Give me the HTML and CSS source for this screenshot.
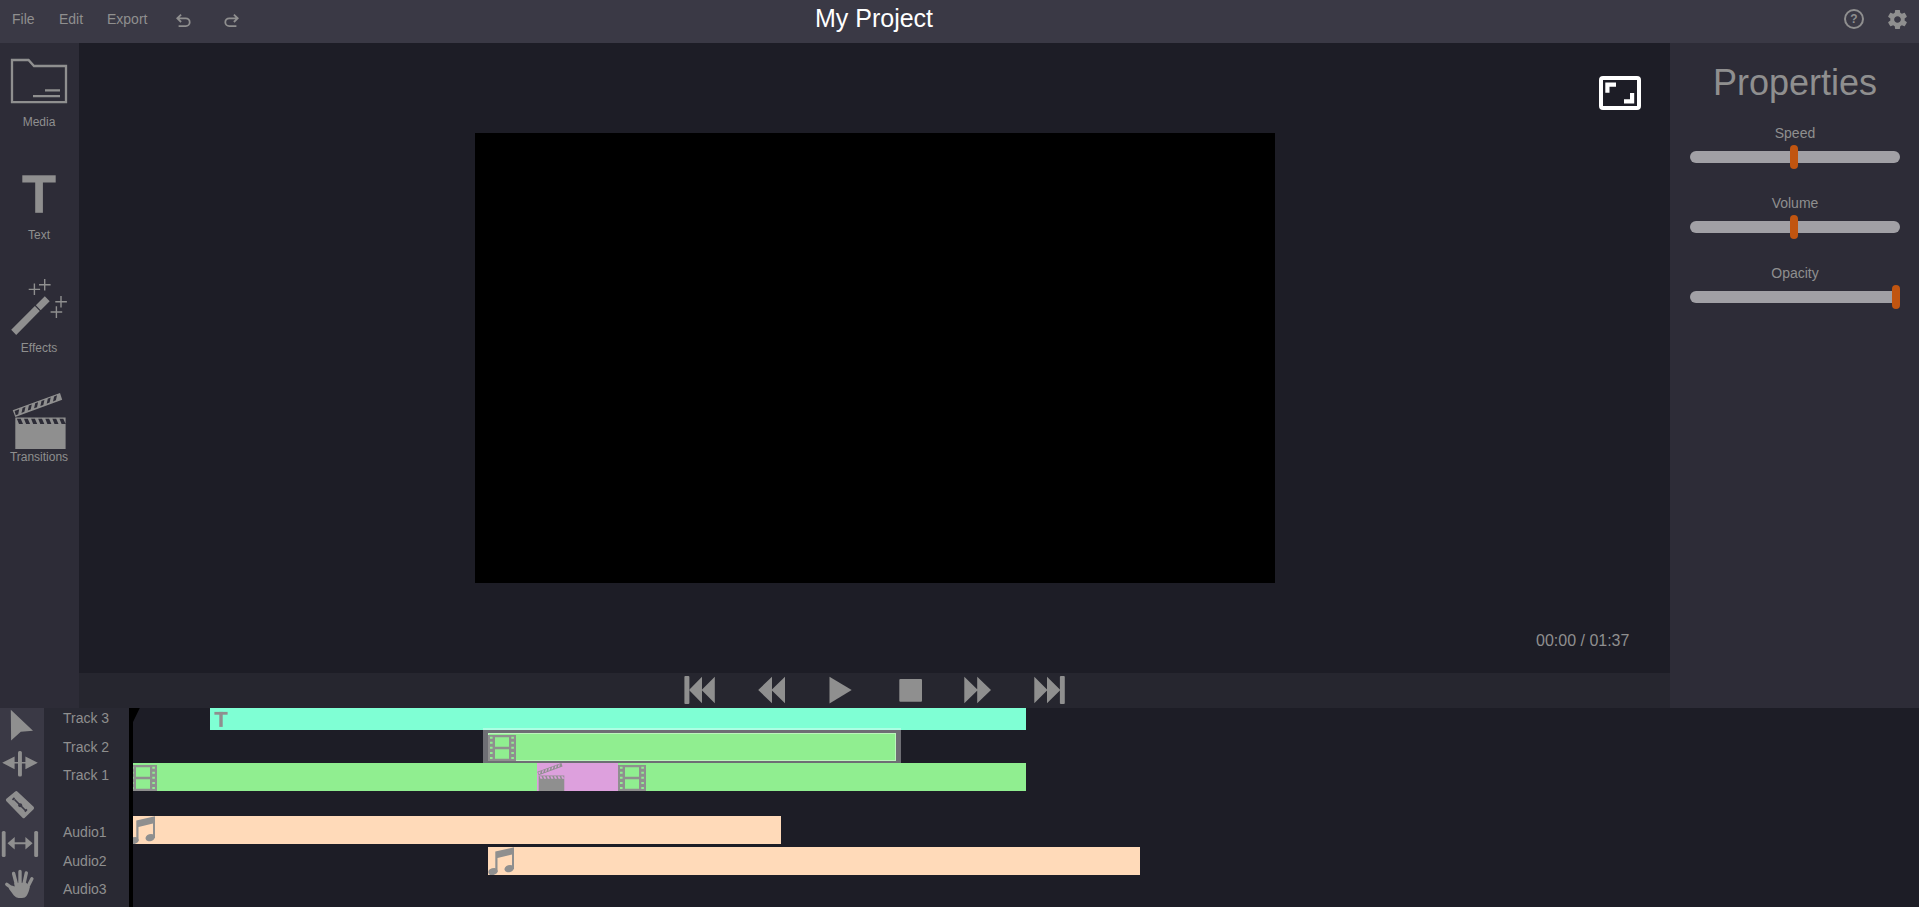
FILE: index.html
```html
<!DOCTYPE html>
<html lang="en">
<head>
<meta charset="utf-8">
<title>My Project</title>
<link rel="stylesheet" href="styles.css">
</head>
<body>
<svg class="defs" aria-hidden="true">
  <symbol id="clapper" viewBox="0 0 55 56"><path fill-rule="evenodd" d="M3.3 24.5H53.6V56H3.3zM4.9 25.8l2.1 5.2h4l-2.3-5.2zm7.1 0l2.1 5.2h4l-2.3-5.2zm7.1 0l2.1 5.2h4l-2.3-5.2zm7.1 0l2.1 5.2h4l-2.3-5.2zm7.1 0l2.1 5.2h4l-2.3-5.2zm7.1 0l2.1 5.2h4l-2.3-5.2zm7.1 0l2.1 5.2h4l-2.3-5.2z"/><path fill-rule="evenodd" d="M.7 17.3L48 0l2.2 6.8L3.3 24zM2.6 18l1.2 4.2 2.4-.9 1-5zM10.6 14.900l2.900-1.100-1.100 5-2.900 1.100zM16.900 12.600l2.900-1.100-1.100 5-2.900 1.100zM23.200 10.300l2.900-1.100-1.100 5-2.900 1.100zM29.500 8l2.900-1.100-1.100 5-2.900 1.100zM35.800 5.700l2.900-1.100-1.100 5-2.900 1.100zM42.100 3.400l2.900-1.100-1.100 5-2.900 1.100z"/></symbol>
  <symbol id="film" viewBox="0 0 28 26"><path fill-rule="evenodd" d="M0 0H28V26H0zM7 2.3h14v9.5H7zM7 14.3h14v9.5H7zM2 1.7h2.6v2H2zm0 5h2.6v2H2zm0 5h2.6v2H2zm0 5.2h2.6v2H2zm0 5.2h2.6v2H2zM23.3 1.7h2.6v2h-2.6zm0 5h2.6v2h-2.6zm0 5h2.6v2h-2.6zm0 5.2h2.6v2h-2.6zm0 5.2h2.6v2h-2.6z"/></symbol>
  <symbol id="music" viewBox="0 0 27 28"><path d="M7.3 4.6L26 .3V22h-2V7.6L9.5 11v14H7.3z"/><ellipse cx="5" cy="24.6" rx="4.7" ry="3.4" transform="rotate(-18 5 24.6)"/><ellipse cx="21.2" cy="21.6" rx="4.8" ry="3.5" transform="rotate(-18 21.2 21.6)"/></symbol>
</svg>

<div class="app">
  <header class="topbar">
    <nav class="menu">
      <span class="menu-file">File</span>
      <span class="menu-edit">Edit</span>
      <span class="menu-export">Export</span>
      <svg class="undo" width="16" height="16" viewBox="0 0 16 16"><path d="M5.1 1.600L1.300 5.300 5.100 9M1.300 5.300H9.800a3.900 3.900 0 0 1 0 7.800H2.600"/></svg>
      <svg class="redo" width="16" height="16" viewBox="0 0 16 16"><path d="M10.900 1.600l3.800 3.700L10.900 9M14.700 5.300H6.200a3.900 3.900 0 0 0 0 7.800H13.400"/></svg>
    </nav>
    <h1 class="title">My Project</h1>
    <div class="settings">
      <span class="help">?</span>
      <svg width="23" height="23" viewBox="0 0 24 24"><path d="M19.43 12.98c.04-.32.07-.64.07-.98s-.03-.66-.07-.98l2.11-1.65c.19-.15.24-.42.12-.64l-2-3.46c-.12-.22-.39-.3-.61-.22l-2.49 1c-.52-.4-1.08-.73-1.69-.98l-.38-2.65C14.46 2.18 14.25 2 14 2h-4c-.25 0-.46.18-.49.42l-.38 2.65c-.61.25-1.17.59-1.69.98l-2.49-1c-.23-.09-.49 0-.61.22l-2 3.46c-.13.22-.07.49.12.64l2.11 1.65c-.04.32-.07.65-.07.98s.03.66.07.98l-2.11 1.65c-.19.15-.24.42-.12.64l2 3.46c.12.22.39.3.61.22l2.49-1c.52.4 1.08.73 1.69.98l.38 2.65c.03.24.24.42.49.42h4c.25 0 .46-.18.49-.42l.38-2.65c.61-.25 1.17-.59 1.69-.98l2.49 1c.23.09.49 0 .61-.22l2-3.46c.12-.22.07-.49-.12-.64l-2.11-1.65zM12 15.5c-1.93 0-3.5-1.57-3.5-3.5s1.57-3.5 3.5-3.5 3.5 1.57 3.5 3.5-1.57 3.5-3.5 3.5z"/></svg>
    </div>
  </header>

  <main class="workspace">
    <aside class="sidebar">
      <div class="side-item"><svg width="79" height="72" viewBox="0 43 79 72"><path class="line" d="M12 60H28.5L34 66H66V102.200H12zM45 90.400H60M33 96.200H60"/></svg><span>Media</span></div>
      <div class="side-item"><svg width="79" height="72" viewBox="0 156 79 72"><rect x="22.3" y="175.3" width="33.4" height="7.2"/><rect x="35.2" y="180" width="7.7" height="32.8"/></svg><span>Text</span></div>
      <div class="side-item"><svg width="79" height="72" viewBox="0 269 79 72"><path d="M11.2 329.8L34.9 306l4.9 4.9L16.2 335zM35.8 305.2L44.8 296.2l4.9 5-9 9z"/><path class="spark" d="M28.7 289.4h11.4M34.4 283.4v11.6M39 284.7h11.6M44.7 279v11.4M55.3 301.7h11.6M61 296v11.4M50.6 312h11.6M56.4 306.3v11.6"/></svg><span>Effects</span></div>
      <div class="side-item"><svg width="79" height="68" viewBox="0 382 79 68"><use href="#clapper" x="12" y="393" width="55" height="56"/></svg><span>Transitions</span></div>
    </aside>

    <section class="preview">
      <div class="stage">
        <div class="screen"></div>
        <svg class="fullscreen" width="42" height="34" viewBox="0 0 42 34"><rect x="2" y="2" width="38" height="30" rx="2" fill="none" stroke="#fff" stroke-width="4"/><path d="M6.3 6.5H17v4.2h-6.5v6H6.3zM35.2 27.5H25v-4.2h6v-6.2h4.2z" fill="#fff"/></svg>
        <span class="time">00:00 / 01:37</span>
      </div>
      <div class="controls">
        <svg class="c-first" width="31" height="28" viewBox="684 676 31 28"><rect x="684.4" y="676" width="5" height="28" rx="1"/><path d="M689 690l13-13.2v26.4zM701.6 690l13.2-13.2v26.4z"/></svg>
        <svg class="c-rewind" width="28" height="28" viewBox="758 676 28 28"><path d="M758.2 690l13.8-13.2v26.4zM771.4 690L785 676.8v26.4z"/></svg>
        <svg class="c-play" width="23" height="28" viewBox="829 676 23 28"><path d="M829.5 676.8L851.7 690l-22.2 13.6z"/></svg>
        <svg class="c-stop" width="23" height="28" viewBox="899 676 23 28"><rect x="899.3" y="679" width="22.7" height="22.8" rx="1"/></svg>
        <svg class="c-forward" width="28" height="28" viewBox="964 676 28 28"><path d="M964.3 676.8l13.6 13.2-13.6 13.2zM977.2 676.8L991 690l-13.8 13.2z"/></svg>
        <svg class="c-last" width="31" height="28" viewBox="1034 676 31 28"><path d="M1034.3 676.8l13.2 13.2-13.2 13.2zM1047 676.8l13.4 13.2-13.4 13.2z"/><rect x="1059.9" y="676" width="4.9" height="28" rx="1"/></svg>
      </div>
    </section>

    <aside class="properties">
      <h2>Properties</h2>
      <div class="prop"><label>Speed</label><div class="slider"><div class="thumb mid"></div></div></div>
      <div class="prop"><label>Volume</label><div class="slider"><div class="thumb mid"></div></div></div>
      <div class="prop"><label>Opacity</label><div class="slider"><div class="thumb end"></div></div></div>
    </aside>
  </main>

  <footer class="timeline">
    <div class="tools">
      <svg width="44" height="35" viewBox="0 708 44 35"><path d="M10.800 709.800L33 730.800l-12.200.9-9.700 8.700z"/></svg>
      <svg width="44" height="41" viewBox="0 743 44 41"><rect x="18" y="751" width="3.900" height="25.600" rx="1.500"/><path d="M2.200 762.800l12.400-6.400v5.600h10.800v-5.600l12.400 6.400-12.400 6.400v-5.600H14.600v5.600z"/></svg>
      <svg width="44" height="40" viewBox="0 784 44 40"><path d="M15.200 791.400q1.400-.8 2.400.3L33.600 806.800q1 1.300 0 2.400L24.800 817.700q-1.200 1-2.300 0L6.200 801q-.8-1.200.2-2.300z"/><path class="cut" d="M14.500 799.500L26 811M12.500 799.800l2-2M24.900 811.600l2-2.200"/><circle class="cut-dot" cx="20.200" cy="805.200" r="2"/></svg>
      <svg width="44" height="40" viewBox="0 824 44 40"><rect x="1.800" y="831" width="3.800" height="26" rx="1.500"/><rect x="34.200" y="831" width="3.900" height="26" rx="1.500"/><path d="M7.500 843.200l7.200-6.200v5.200h10.700v-5.200l7.200 6.200-7.200 6.200v-5.200H14.700v5.200z"/></svg>
      <svg width="44" height="43" viewBox="0 864 44 43"><path class="finger" d="M13.600 873.500l3 11.500M20 871.400V885M26.300 873l-2.600 12M31.900 878.800l-5.600 11M6.800 884.300l8.200 6"/><path d="M14.300 883l12-.3 3.500 4.600q-1.200 6-3.300 8.600-1.200 2.100-4.500 2.100h-3.500q-2.600-.3-4.800-2.700l-5-6.800 3-3 3 1z"/></svg>
    </div>
    <div class="labels">
      <span>Track 3</span><span>Track 2</span><span>Track 1</span>
      <span class="audio-first">Audio1</span><span>Audio2</span><span>Audio3</span>
    </div>
    <div class="lanes">
      <div class="lane lane-text"><div class="clip text-clip"><svg width="22" height="22" viewBox="210 708 22 22"><rect x="214.400" y="711.900" width="13.200" height="2.800"/><rect x="219.300" y="711.900" width="3.400" height="15"/></svg></div></div>
      <div class="lane lane-2"><div class="clip video selected"><svg width="28" height="26"><use href="#film"/></svg></div></div>
      <div class="lane lane-1"><div class="clip video v-a"><svg width="28" height="26"><use href="#film"/></svg></div><div class="clip transition"><svg width="28" height="28"><use href="#clapper" width="28" height="28.500"/></svg></div><div class="clip video v-b"><svg width="28" height="26"><use href="#film"/></svg></div></div>
      <div class="lane lane-a1"><div class="clip audio"><svg width="27" height="28"><use href="#music"/></svg></div></div>
      <div class="lane lane-a2"><div class="clip audio"><svg width="27" height="28"><use href="#music"/></svg></div></div>
      <svg class="playhead" width="11" height="199" viewBox="0 0 11 199"><path d="M0 0H10.800L4 14V199H0z"/></svg>
    </div>
  </footer>
</div>
</body>
</html>
```

FILE: styles.css
```css
* { box-sizing: border-box; }
body {
  margin: 0;
  background: #1d1d26;
  color: #8f8f8f;
  font: 14px/16px "Liberation Sans", Arial, sans-serif;
  overflow: hidden;
}
svg { display: block; fill: #8f8f8f; flex: none; }
.defs { width: 0; height: 0; position: absolute; }
.app { display: flex; flex-direction: column; width: 1919px; height: 907px; }

.topbar {
  display: grid;
  grid-template-columns: 79px 1590px 250px;
  height: 43px;
  background: #3a3945;
}
.menu { display: flex; padding: 11px 0 0 12px; width: 260px; grid-area: 1 / 1; }
.menu-file { width: 47px; }
.menu-edit { width: 48px; }
.menu-export { width: 69px; }
.undo, .redo { margin-top: 2px; fill: none; stroke: #8f8f8f; stroke-width: 1.8; }
.redo { margin-left: 31px; }
.title {
  grid-area: 1 / 2;
  margin: 4px 0 0;
  color: #fff;
  font-size: 25px;
  line-height: 28px;
  font-weight: normal;
  text-align: center;
}
.settings { grid-area: 1 / 3; display: flex; justify-content: flex-end; padding: 8px 10px 0 0; gap: 22px; }
.help {
  width: 20px;
  height: 20px;
  margin-top: 1px;
  border: 2px solid #8f8f8f;
  border-radius: 50%;
  font-size: 12px;
  line-height: 16px;
  font-weight: bold;
  text-align: center;
}

.workspace { display: flex; height: 665px; }
.sidebar { width: 79px; background: #2d2c37; font-size: 12px; line-height: 14px; }
.side-item { height: 113px; text-align: center; }
.side-item span { display: block; width: 78px; }
.line { fill: none; stroke: #8f8f8f; stroke-width: 2.3; }
.spark { fill: none; stroke: #8f8f8f; stroke-width: 1.4; }

.preview { width: 1591px; }
.stage {
  display: grid;
  grid-template-columns: 396px 800px 395px;
  grid-template-rows: 90px 450px 90px;
  height: 630px;
}
.screen { grid-area: 2 / 2; background: #000; }
.fullscreen { grid-area: 1 / 3; margin: 33px 0 0 324px; }
.time { grid-area: 3 / 3; padding: 49px 0 0 261px; font-size: 16px; line-height: 18px; white-space: nowrap; }
.controls { display: flex; height: 35px; padding: 3px 0 0 605px; background: #26262f; }
.c-rewind, .c-play { margin-left: 43px; }
.c-stop { margin-left: 47px; }
.c-forward, .c-last { margin-left: 42px; }

.properties { width: 249px; padding: 19px 19px 0 20px; background: #2d2c37; }
.properties h2 { margin: 0 0 22px; font-size: 36px; line-height: 41px; font-weight: normal; text-align: center; }
.prop { width: 210px; height: 70px; text-align: center; }
.prop label { display: block; }
.slider {
  display: flex;
  align-items: center;
  height: 12px;
  margin-top: 10px;
  border-radius: 6px;
  background: #a1a0a5;
}
.thumb { flex: none; width: 8px; height: 24px; border-radius: 4px; background: #c15510; }
.mid { margin-left: 100px; }
.end { margin-left: auto; }

.timeline { display: flex; height: 199px; overflow: hidden; }
.tools { width: 44px; background: #3a3945; }
.cut { fill: none; stroke: #3a3945; stroke-width: 1.7; }
.cut-dot { fill: #3a3945; }
.finger { fill: none; stroke: #8f8f8f; stroke-width: 3.4; stroke-linecap: round; }
.labels { display: flex; flex-direction: column; gap: 12.5px; width: 85px; padding: 2px 0 0 19px; background: #292933; }
.audio-first { margin-top: 28.5px; }
.lanes { position: relative; flex: 1; background: #1d1d26; }
.lane { display: flex; height: 28px; }
.lane-text { height: 22px; padding-left: 81px; }
.lane-2 { margin-top: 3px; padding-left: 359px; }
.lane-1 { margin-top: 2px; position: relative; }
.lane-a1 { margin-top: 25px; }
.lane-a2 { margin-top: 3px; padding-left: 359px; }
.clip { flex: none; overflow: hidden; }
.text-clip { width: 816px; background: #7fffd4; }
.video { padding-top: 2px; background: #90ee90; }
.selected {
  width: 408px;
  box-shadow: inset 0 0 0 1px rgba(255, 255, 255, .4);
  outline: 5px solid rgba(255, 255, 255, .36);
}
.v-a, .v-b { width: 408px; }
.transition { width: 81px; background: #dda0dd; }
.audio { width: 652px; background: #ffdab9; }
.playhead { position: absolute; left: 0; top: 0; fill: #000; }
```
